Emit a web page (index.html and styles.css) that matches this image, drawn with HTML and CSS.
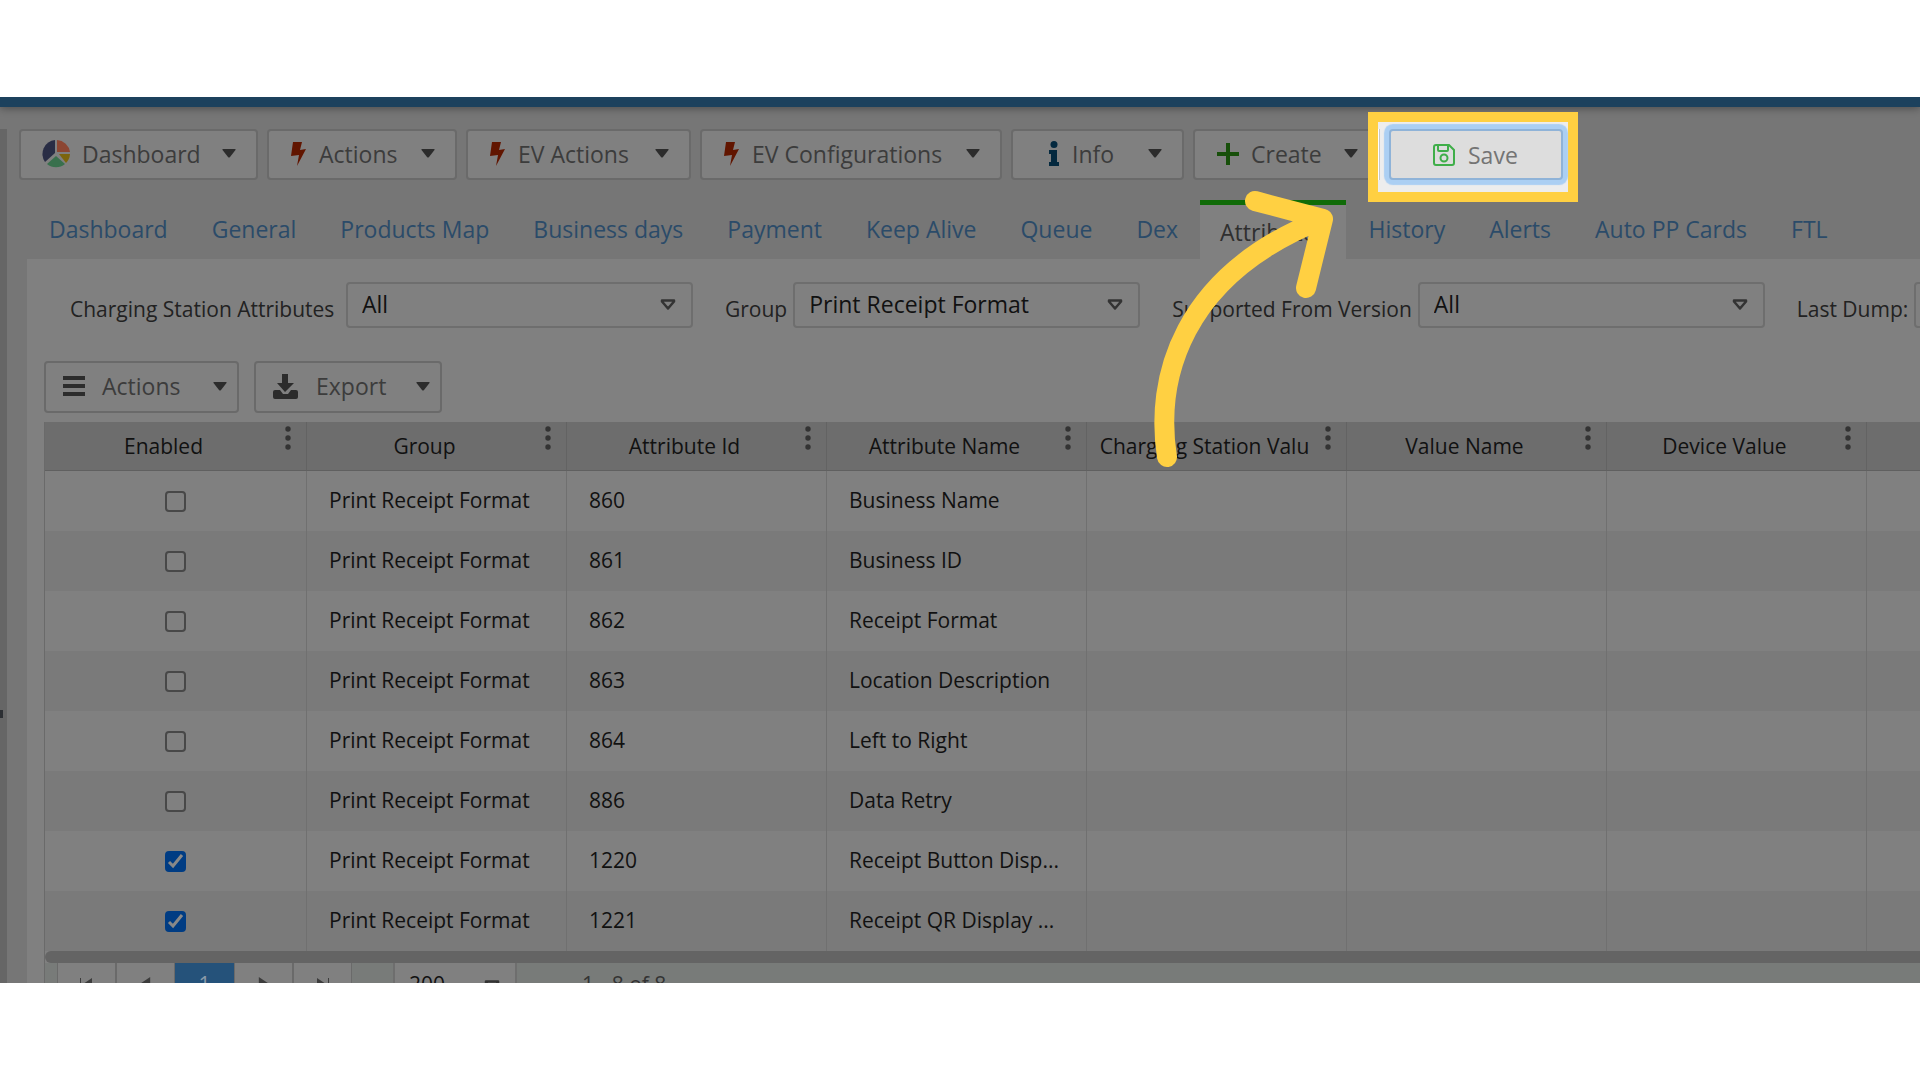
FILE: index.html
```html
<!DOCTYPE html>
<html lang="en">
<head>
    <meta charset="UTF-8">
    <meta name="viewport" content="width=device-width, initial-scale=1.0">
    <title>Charging Station Attributes</title>
    <link rel="stylesheet" href="styles.css">
</head>
<body>
    <!-- shared icons -->
    <svg class="sprite" aria-hidden="true">
        <symbol id="bolt" viewBox="0 0 15 24"><path d="M2 0h9L9 8l6-1L6 24l2-11-8 1z"/></symbol>
        <symbol id="caret" viewBox="0 0 14 9"><path d="M1 0h12q1 0 .5 1L8 8q-1 1-2 0L.5 1Q0 0 1 0z"/></symbol>
        <symbol id="open" viewBox="0 0 16 12"><path d="M2 1.500h12v1L8 9.500 2 2.500z" fill="none" stroke="currentColor" stroke-width="2.500" stroke-linejoin="round"/></symbol>
        <symbol id="dots" viewBox="0 0 6 24"><circle cx="3" cy="3" r="2.700"/><circle cx="3" cy="12" r="2.700"/><circle cx="3" cy="21" r="2.700"/></symbol>
        <symbol id="prev" viewBox="0 0 10 12"><path d="M9 0v12L0 6z"/></symbol>
        <symbol id="next" viewBox="0 0 10 12"><path d="M1 0v12l9-6z"/></symbol>
    </svg>

    <main class="app">
        <div class="topbar"></div>
        <div class="workspace">
            <div class="splitter"></div>
            <div class="content">
                <div class="toolbar">
                    <button class="button dashboard-btn">
                        <svg class="pie" viewBox="0 0 30 30">
                            <path d="M14 14V1A14 14 0 0 0 4 23z" fill="#292d45"/>
                            <path d="M16 13V1a14 14 0 0 1 13 12z" fill="#8c4632"/>
                            <path d="M18 15h11a14 14 0 0 1-4 9z" fill="#7c650d"/>
                            <path d="M15 17l9 8a14 14 0 0 1-18 0z" fill="#39704d"/>
                        </svg>
                        <span>Dashboard</span>
                        <svg class="caret"><use href="#caret"/></svg>
                    </button>
                    <button class="button actions-btn">
                        <svg class="bolt"><use href="#bolt"/></svg>
                        <span>Actions</span>
                        <svg class="caret"><use href="#caret"/></svg>
                    </button>
                    <button class="button ev-actions-btn">
                        <svg class="bolt"><use href="#bolt"/></svg>
                        <span>EV Actions</span>
                        <svg class="caret"><use href="#caret"/></svg>
                    </button>
                    <button class="button ev-config-btn">
                        <svg class="bolt"><use href="#bolt"/></svg>
                        <span>EV Configurations</span>
                        <svg class="caret"><use href="#caret"/></svg>
                    </button>
                    <button class="button info-btn">
                        <svg class="info" viewBox="0 0 10 25"><circle cx="5" cy="3.500" r="3.500"/><path d="M0 9h8v12h2v4H0v-4h2v-8H0z"/></svg>
                        <span>Info</span>
                        <svg class="caret"><use href="#caret"/></svg>
                    </button>
                    <button class="button create-btn">
                        <svg class="plus" viewBox="0 0 22 22"><path d="M9 0h4v9h9v4h-9v9H9v-9H0V9h9z"/></svg>
                        <span>Create</span>
                        <svg class="caret"><use href="#caret"/></svg>
                    </button>
                    <div class="spotlight">
                        <button class="button save-btn">
                            <svg class="disk" viewBox="0 0 22 22"><path d="M3 1h13l5 5v13q0 2-2 2H3q-2 0-2-2V3q0-2 2-2z"/><path d="M5 2v4q0 1 1 1h8q1 0 1-1V2"/><circle cx="11" cy="14" r="3.500"/></svg>
                            <span>Save</span>
                        </button>
                    </div>
                </div>

                <nav class="tabs">
                    <a href="#">Dashboard</a>
                    <a href="#">General</a>
                    <a href="#">Products Map</a>
                    <a href="#">Business days</a>
                    <a href="#">Payment</a>
                    <a href="#">Keep Alive</a>
                    <a href="#">Queue</a>
                    <a href="#">Dex</a>
                    <a href="#" class="active">Attributes</a>
                    <a href="#">History</a>
                    <a href="#">Alerts</a>
                    <a href="#">Auto PP Cards</a>
                    <a href="#">FTL</a>
                </nav>

                <section class="panel">
                    <div class="filters">
                        <div class="filter">
                            <label class="wide" for="station">Charging Station Attributes</label>
                            <div class="select">
                                <select id="station"><option>All</option></select>
                                <svg><use href="#open"/></svg>
                            </div>
                        </div>
                        <div class="filter">
                            <label for="group">Group</label>
                            <div class="select">
                                <select id="group"><option>Print Receipt Format</option></select>
                                <svg><use href="#open"/></svg>
                            </div>
                        </div>
                        <div class="filter">
                            <label for="version">Supported From Version</label>
                            <div class="select">
                                <select id="version"><option>All</option></select>
                                <svg><use href="#open"/></svg>
                            </div>
                        </div>
                        <div class="filter">
                            <label for="dump">Last Dump:</label>
                            <input class="dump" id="dump" type="text">
                        </div>
                    </div>

                    <div class="grid-actions">
                        <button class="button list-btn">
                            <svg class="bars" viewBox="0 0 22 20"><path d="M0 0h22v4H0zM0 8h22v4H0zM0 16h22v4H0z"/></svg>
                            <span>Actions</span>
                            <svg class="caret"><use href="#caret"/></svg>
                        </button>
                        <button class="button export-btn">
                            <svg class="download" viewBox="0 0 25 25"><path d="M9 0h6v9h6l-9 9-8-9h5zM2 16h5l3 4h5l3-4h5q2 0 2 2v5q0 2-2 2H2q-2 0-2-2v-5q0-2 2-2z"/></svg>
                            <span>Export</span>
                            <svg class="caret"><use href="#caret"/></svg>
                        </button>
                    </div>

                    <div class="grid">
                        <table>
                            <thead>
                                <tr>
                                    <th class="first">Enabled<button class="menu" aria-label="Column menu"><svg><use href="#dots"/></svg></button></th>
                                    <th>Group<button class="menu" aria-label="Column menu"><svg><use href="#dots"/></svg></button></th>
                                    <th>Attribute Id<button class="menu" aria-label="Column menu"><svg><use href="#dots"/></svg></button></th>
                                    <th>Attribute Name<button class="menu" aria-label="Column menu"><svg><use href="#dots"/></svg></button></th>
                                    <th>Charging Station Valu<button class="menu" aria-label="Column menu"><svg><use href="#dots"/></svg></button></th>
                                    <th>Value Name<button class="menu" aria-label="Column menu"><svg><use href="#dots"/></svg></button></th>
                                    <th>Device Value<button class="menu" aria-label="Column menu"><svg><use href="#dots"/></svg></button></th>
                                    <th></th>
                                </tr>
                            </thead>
                            <tbody>
                                <tr><td><input type="checkbox" aria-label="Enable 860"></td><td>Print Receipt Format</td><td>860</td><td>Business Name</td><td></td><td></td><td></td><td></td></tr>
                                <tr><td><input type="checkbox" aria-label="Enable 861"></td><td>Print Receipt Format</td><td>861</td><td>Business ID</td><td></td><td></td><td></td><td></td></tr>
                                <tr><td><input type="checkbox" aria-label="Enable 862"></td><td>Print Receipt Format</td><td>862</td><td>Receipt Format</td><td></td><td></td><td></td><td></td></tr>
                                <tr><td><input type="checkbox" aria-label="Enable 863"></td><td>Print Receipt Format</td><td>863</td><td>Location Description</td><td></td><td></td><td></td><td></td></tr>
                                <tr><td><input type="checkbox" aria-label="Enable 864"></td><td>Print Receipt Format</td><td>864</td><td>Left to Right</td><td></td><td></td><td></td><td></td></tr>
                                <tr><td><input type="checkbox" aria-label="Enable 886"></td><td>Print Receipt Format</td><td>886</td><td>Data Retry</td><td></td><td></td><td></td><td></td></tr>
                                <tr><td><input type="checkbox" aria-label="Enable 1220" checked></td><td>Print Receipt Format</td><td>1220</td><td>Receipt Button Disp...</td><td></td><td></td><td></td><td></td></tr>
                                <tr><td><input type="checkbox" aria-label="Enable 1221" checked></td><td>Print Receipt Format</td><td>1221</td><td>Receipt QR Display ...</td><td></td><td></td><td></td><td></td></tr>
                            </tbody>
                        </table>
                        <div class="scrollbar"></div>
                        <div class="pager">
                            <button class="page" aria-label="First page"><svg viewBox="0 0 13 12"><path d="M0 0h1v12H0zM12 0v12L3 6z"/></svg></button>
                            <button class="page" aria-label="Previous page"><svg><use href="#prev"/></svg></button>
                            <button class="page current">1</button>
                            <button class="page" aria-label="Next page"><svg><use href="#next"/></svg></button>
                            <button class="page" aria-label="Last page"><svg viewBox="0 0 13 12"><path d="M12 0h1v12h-1zM1 0v12l9-6z"/></svg></button>
                            <div class="select page-size">
                                <select aria-label="Page size"><option>200</option></select>
                                <svg><use href="#open"/></svg>
                            </div>
                            <span class="range">1 - 8 of 8</span>
                        </div>
                    </div>
                </section>
            </div>
        </div>

        <!-- pointer to the Save button -->
        <svg class="arrow" viewBox="1150 190 190 280">
            <path d="M1167 457C1155 380 1180 275 1323 219M1255 201L1323 219L1306 288"/>
        </svg>
    </main>
</body>
</html>
```

FILE: styles.css
```css
* {
    box-sizing: border-box;
}

body {
    display: flex;
    flex-direction: column;
    height: 100vh;
    margin: 0;
    padding: 97px 0;
    background: #fff;
    font-family: "Open Sans", "Noto Sans", sans-serif;
    font-size: 21px;
    line-height: 28px;
    color: #111;
    overflow: hidden;
}

button,
select,
input {
    font: inherit;
    color: inherit;
    margin: 0;
}

svg {
    fill: currentColor;
    flex: none;
}

.sprite {
    position: absolute;
    width: 0;
    height: 0;
}

.app {
    position: relative;
    flex: 1;
    min-height: 0;
    display: flex;
    flex-direction: column;
    background: #767676;
    overflow: hidden;
}

.topbar {
    height: 10px;
    flex: none;
    background: #1c415d;
    box-shadow: 0 1px 8px rgba(0, 0, 0, 0.4);
}

.workspace {
    display: flex;
    flex: 1;
    min-height: 0;
    padding-top: 22px;
}

.splitter {
    position: relative;
    width: 7px;
    flex: none;
    background: #666;
}

/* collapse handle */
.splitter::after {
    content: "";
    position: absolute;
    top: 68%;
    left: 0;
    width: 3px;
    height: 8px;
    background: #2c2f33;
}

.content {
    flex: 1;
    min-width: 0;
}

/* buttons */
.toolbar {
    display: flex;
    gap: 9px;
    padding-left: 12px;
}

.button {
    display: flex;
    align-items: center;
    height: 51px;
    padding: 0 20px 2px;
    background: #808080;
    border: 2px solid #6a6a6a;
    border-radius: 4px;
    color: #3c3c3c;
    font-size: 23px;
    white-space: nowrap;
    flex: none;
}

.caret {
    width: 14px;
    height: 9px;
    margin-left: auto;
    color: #2c2c2c;
}

.dashboard-btn {
    width: 239px;
}

.actions-btn {
    width: 190px;
}

.ev-actions-btn {
    width: 225px;
}

.ev-config-btn {
    width: 302px;
}

.info-btn {
    width: 173px;
    padding-left: 36px;
}

.create-btn {
    width: 187px;
}

.save-btn {
    position: relative;
    width: 174px;
    padding: 0 0 0 42px;
    background: #ddd;
    border-color: #8fb3d8;
    box-shadow: 0 0 1px 5px #abcff3;
    color: #747474;
}

.pie {
    width: 30px;
    height: 30px;
    margin-right: 11px;
}

.bolt {
    width: 15px;
    height: 24px;
    margin: 0 13px 0 2px;
    color: #611500;
}

.info {
    width: 10px;
    height: 25px;
    margin-right: 13px;
    color: #04293f;
}

.plus {
    width: 22px;
    height: 22px;
    margin: 0 12px 0 2px;
    color: #174f0a;
}

.disk {
    width: 22px;
    height: 22px;
    margin-right: 13px;
    fill: none;
    stroke: #3fae49;
    stroke-width: 2;
}

/* yellow frame round the Save button */
.spotlight {
    position: relative;
}

.spotlight::before {
    content: "";
    position: absolute;
    top: -17px;
    right: -15px;
    bottom: -22px;
    left: -21px;
    background: #ededed linear-gradient(90deg, #fff 1px, #c8c8c8 1px) 0 7px / 2px 51px no-repeat;
    border: 10px solid #ffd042;
}

/* tabs */
.tabs {
    display: flex;
    align-items: flex-end;
    height: 79px;
    padding-left: 20px;
    font-size: 23px;
    white-space: nowrap;
}

.tabs a {
    height: 59px;
    padding: 15px 22px 0;
    color: #2b4b69;
    text-decoration: none;
}

.tabs .active {
    padding: 13px 20px 0;
    background: #808080;
    border-top: 5px solid #106b08;
    color: #2f2f2f;
}

/* attributes panel */
.panel {
    margin-left: 20px;
    padding: 23px 0 0 17px;
    background: #808080;
    overflow: hidden;
}

.filters {
    display: flex;
    gap: 32px;
    padding-left: 26px;
    white-space: nowrap;
}

.filter {
    display: flex;
    gap: 6px;
    flex: none;
}

.filter label {
    padding-top: 13px;
    color: #222;
}

.filter .wide {
    min-width: 270px;
}

.select {
    position: relative;
    width: 347px;
    height: 46px;
}

.select select {
    width: 100%;
    height: 100%;
    padding: 0 40px 2px 14px;
    appearance: none;
    background: #808080;
    border: 2px solid #6e6e6e;
    border-radius: 4px;
    font-size: 23px;
}

.select svg {
    position: absolute;
    top: 17px;
    right: 17px;
    width: 16px;
    height: 12px;
    color: #333;
    pointer-events: none;
}

.dump {
    width: 240px;
    height: 46px;
    background: #808080;
    border: 2px solid #6e6e6e;
    border-radius: 4px;
}

.grid-actions {
    display: flex;
    gap: 15px;
    padding: 33px 0 9px;
}

.grid-actions .button {
    height: 52px;
    padding: 0 10px 2px 17px;
}

.list-btn {
    width: 195px;
}

.export-btn {
    width: 188px;
}

.bars {
    width: 22px;
    height: 20px;
    margin-right: 17px;
    color: #2c2c2c;
}

.download {
    width: 25px;
    height: 25px;
    margin-right: 18px;
    color: #2c2c2c;
}

/* grid */
.grid {
    border-left: 1px solid #6a6a6a;
    overflow: hidden;
}

table {
    width: 2082px;
    table-layout: fixed;
    border-collapse: separate;
    border-spacing: 0;
}

th {
    position: relative;
    height: 49px;
    padding: 0 30px 0 6px;
    background: #6d6d6d;
    border-right: 1px solid #636363;
    border-bottom: 1px solid #606060;
    font-weight: normal;
    white-space: nowrap;
}

.first {
    width: 262px;
}

.menu {
    position: absolute;
    top: 4px;
    right: 15px;
    width: 6px;
    height: 24px;
    padding: 0;
    background: none;
    border: 0;
    color: #333;
}

.menu svg {
    display: block;
    width: 6px;
    height: 24px;
}

td {
    height: 60px;
    padding: 0 10px 2px 22px;
    border-right: 1px solid #707070;
    white-space: nowrap;
}

td:first-child {
    padding: 0;
    text-align: center;
}

tbody tr:nth-child(even) {
    background: #7a7a7a;
}

td input {
    display: block;
    width: 21px;
    height: 21px;
    margin: 0 auto;
    appearance: none;
    background: #808080;
    border: 2px solid #484848;
    border-radius: 4px;
}

td input:checked {
    background: #003c83 url("data:image/svg+xml,%3Csvg xmlns='http://www.w3.org/2000/svg' viewBox='0 0 21 21'%3E%3Cpath d='M4 11l4 4 9-11' fill='none' stroke='%23888' stroke-width='3'/%3E%3C/svg%3E") center / 21px no-repeat;
    border-color: #003c83;
}

.scrollbar {
    height: 12px;
    background: #646464;
    border-radius: 6px 0 0 6px;
}

.pager {
    display: flex;
    height: 42px;
    padding-left: 12px;
    background: #787b79;
}

.page {
    display: flex;
    align-items: center;
    justify-content: center;
    width: 59px;
    padding: 0;
    background: #808080;
    border: 0;
    border-left: 1px solid #6a6a6a;
    border-right: 1px solid #6a6a6a;
    color: #3c3c3c;
}

.page svg {
    width: 13px;
    height: 14px;
}

.page.current {
    background: #25527a;
    border-color: #25527a;
    color: #8a9aa8;
}

.page-size {
    width: 124px;
    height: 42px;
    margin-left: 41px;
}

.page-size select {
    padding: 0 14px;
    border-width: 0 2px;
    border-radius: 0;
    font-size: 21px;
}

.range {
    padding: 7px 0 0 65px;
    color: #333;
}

.arrow {
    position: absolute;
    top: 93px;
    left: 1150px;
    width: 190px;
    height: 280px;
    fill: none;
    stroke: #ffd042;
    stroke-width: 20;
    stroke-linecap: round;
    stroke-linejoin: round;
}
```
